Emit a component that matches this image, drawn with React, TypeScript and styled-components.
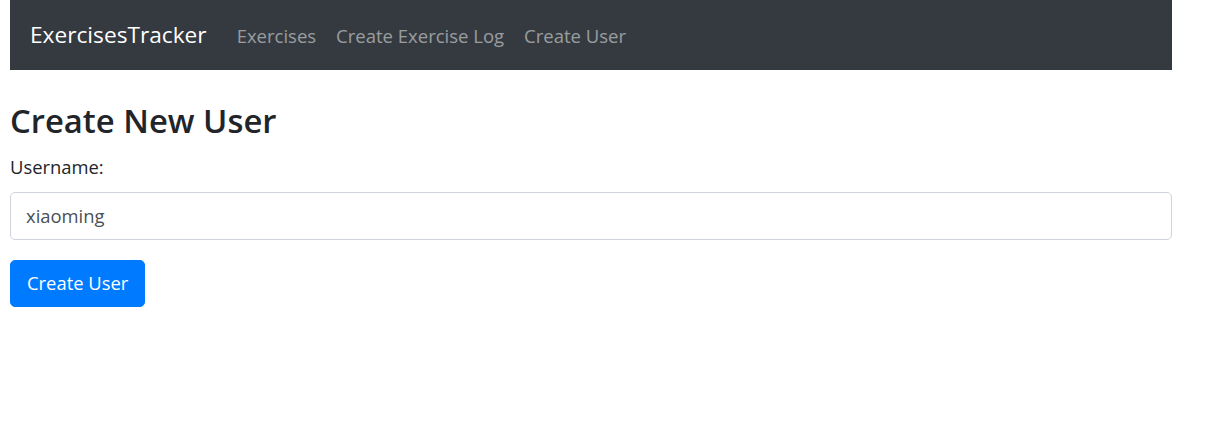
import React from 'react'
import styled, { createGlobalStyle } from 'styled-components'

const GlobalStyle = createGlobalStyle`
  body {
    margin: 0;
    padding: 0 10px;
    background: #fff;
    font-family: "Open Sans", "Noto Sans", sans-serif;
    font-size: 18.4px;
    line-height: 30px;
    color: #212529;
  }
  * { box-sizing: border-box; }
`

const Page = styled.div`
  width: 1162px;
`

const Navbar = styled.nav`
  display: flex;
  align-items: center;
  height: 70px;
  padding: 10px 20px;
  background-color: #343a40;
`

const Brand = styled.a`
  font-size: 22.7px;
  line-height: 37.5px;
  color: #fff;
  margin-right: 20px;
  text-decoration: none;
`

const NavList = styled.ul`
  display: flex;
  list-style: none;
  margin: 0;
  padding: 0;
`

const NavLink = styled.a`
  display: block;
  padding: 11px 10px 9px;
  font-size: 18.5px;
  color: rgba(255, 255, 255, 0.5);
  text-decoration: none;
`

const Heading = styled.h3`
  font-size: 32.8px;
  font-weight: 600;
  line-height: 42px;
  margin: 30px 0 10px;
`

const FormGroup = styled.div`
  margin-bottom: 20px;
`

const Label = styled.label`
  display: inline-block;
  margin-bottom: 10px;
`

const Input = styled.input`
  display: block;
  width: 100%;
  height: 47.5px;
  padding: 7.5px 15px;
  font-family: inherit;
  font-size: 18.4px;
  color: #495057;
  background: #fff;
  border: 1px solid #ced4da;
  border-radius: 5px;
  outline: none;
`

const Button = styled.button`
  display: inline-block;
  height: 47.5px;
  padding: 7.5px 16px;
  font-family: inherit;
  font-size: 18.4px;
  line-height: 30px;
  color: #fff;
  background-color: #007bff;
  border: 1px solid #007bff;
  border-radius: 5px;
  cursor: pointer;
`

export default function App() {
  const [username, setUsername] = React.useState<string>('xiaoming')

  return (
    <Page>
      <GlobalStyle />
      <Navbar>
        <Brand href='#'>ExercisesTracker</Brand>
        <NavList>
          <li><NavLink href='#'>Exercises</NavLink></li>
          <li><NavLink href='#'>Create Exercise Log</NavLink></li>
          <li><NavLink href='#'>Create User</NavLink></li>
        </NavList>
      </Navbar>
      <Heading>Create New User</Heading>
      <form onSubmit={(e) => { e.preventDefault() }}>
        <FormGroup>
          <Label>Username: </Label>
          <Input type='text' value={username} onChange={(e) => { setUsername(e.target.value) }} />
        </FormGroup>
        <FormGroup>
          <Button type='submit'>Create User</Button>
        </FormGroup>
      </form>
    </Page>
  )
}
